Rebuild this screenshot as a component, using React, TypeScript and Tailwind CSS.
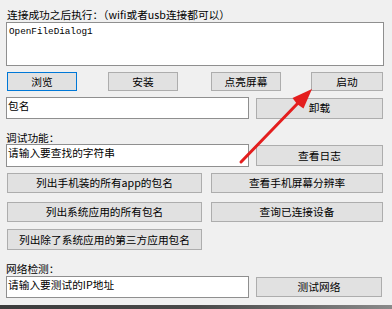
import React from "react";

const Btn: React.FC<{ label: string; className?: string; focused?: boolean }> = ({
  label,
  className = "",
  focused = false,
}) => (
  <div
    className={`flex items-center justify-center bg-[#e1e1e1] border ${
      focused ? "border-[#0078d7]" : "border-[#adadad]"
    } ${className}`}
  >
    {label}
  </div>
);

const Field: React.FC<{ text: string; className?: string }> = ({ text, className = "" }) => (
  <div className={`bg-white border border-[#8f8f8f] pl-[1px] leading-[12px] ${className}`}>{text}</div>
);

export default function App() {
  return (
    <div className="relative flex flex-col w-[392px] h-[309px] overflow-hidden bg-[#f0f0f0] text-black text-[10.7px] leading-[12px] font-['Noto_Sans_CJK_SC',sans-serif]">
      {/* 连接成功 */}
      <div className="pt-[9px] pl-[7px] h-[21px]">连接成功之后执行：（wifi或者usb连接都可以）</div>
      <div className="ml-[6px] mt-[1px] w-[378px] h-[44px] bg-white border border-[#8f8f8f] pt-[3px] pl-[2px] font-['Liberation_Mono',monospace] text-[9.3px] leading-[12px]">
        OpenFileDialog1
      </div>

      <div className="flex mt-[6px] h-[19px]">
        <Btn label="浏览" focused className="ml-[7px] w-[70px]" />
        <Btn label="安装" className="ml-[31px] w-[70px]" />
        <Btn label="点亮屏幕" className="ml-[33px] w-[70px]" />
        <Btn label="启动" className="ml-[30px] w-[72px]" />
      </div>

      <div className="flex items-center mt-[6px] h-[22px]">
        <Field text="包名" className="ml-[6px] w-[243px] h-[22px] pt-[2px]" />
        <Btn label="卸载" className="ml-[7px] w-[127px] h-[21px]" />
      </div>

      {/* 调试功能 */}
      <div className="mt-[13px] pl-[6px] h-[12px]">调试功能：</div>
      <div className="flex items-center h-[23px]">
        <Field text="请输入要查找的字符串" className="ml-[6px] w-[243px] h-[23px] pt-[2px]" />
        <Btn label="查看日志" className="ml-[7px] w-[127px] h-[21px]" />
      </div>

      <div className="flex mt-[6px] h-[20px]">
        <Btn label="列出手机装的所有app的包名" className="ml-[7px] w-[195px]" />
        <Btn label="查看手机屏幕分辨率" className="ml-[9px] w-[172px]" />
      </div>
      <div className="flex mt-[9px] h-[20px]">
        <Btn label="列出系统应用的所有包名" className="ml-[7px] w-[195px]" />
        <Btn label="查询已连接设备" className="ml-[9px] w-[172px]" />
      </div>
      <div className="flex mt-[7px] h-[21px]">
        <Btn label="列出除了系统应用的第三方应用包名" className="ml-[7px] w-[195px]" />
      </div>

      {/* 网络检测 */}
      <div className="mt-[13px] pl-[6px] h-[12px]">网络检测：</div>
      <div className="flex items-center mt-[1px] h-[22px]">
        <Field text="请输入要测试的IP地址" className="ml-[6px] w-[243px] h-[22px] pt-[2px]" />
        <Btn label="测试网络" className="ml-[7px] w-[126px] h-[20px]" />
      </div>

      <div className="mt-auto h-[4px] bg-gradient-to-r from-[#3c3c3c] via-[#4a4a4a] to-[#8a8a8a]" />

      {/* red arrow annotation */}
      <svg className="absolute left-0 top-0" width="392" height="309" viewBox="0 0 392 309">
        <line x1="241" y1="162" x2="299" y2="102" stroke="#e41e1e" strokeWidth="3" strokeLinecap="round" />
        <polygon points="312,89 303.5,108.5 297,104 292.5,98" fill="#e41e1e" />
      </svg>
    </div>
  );
}
